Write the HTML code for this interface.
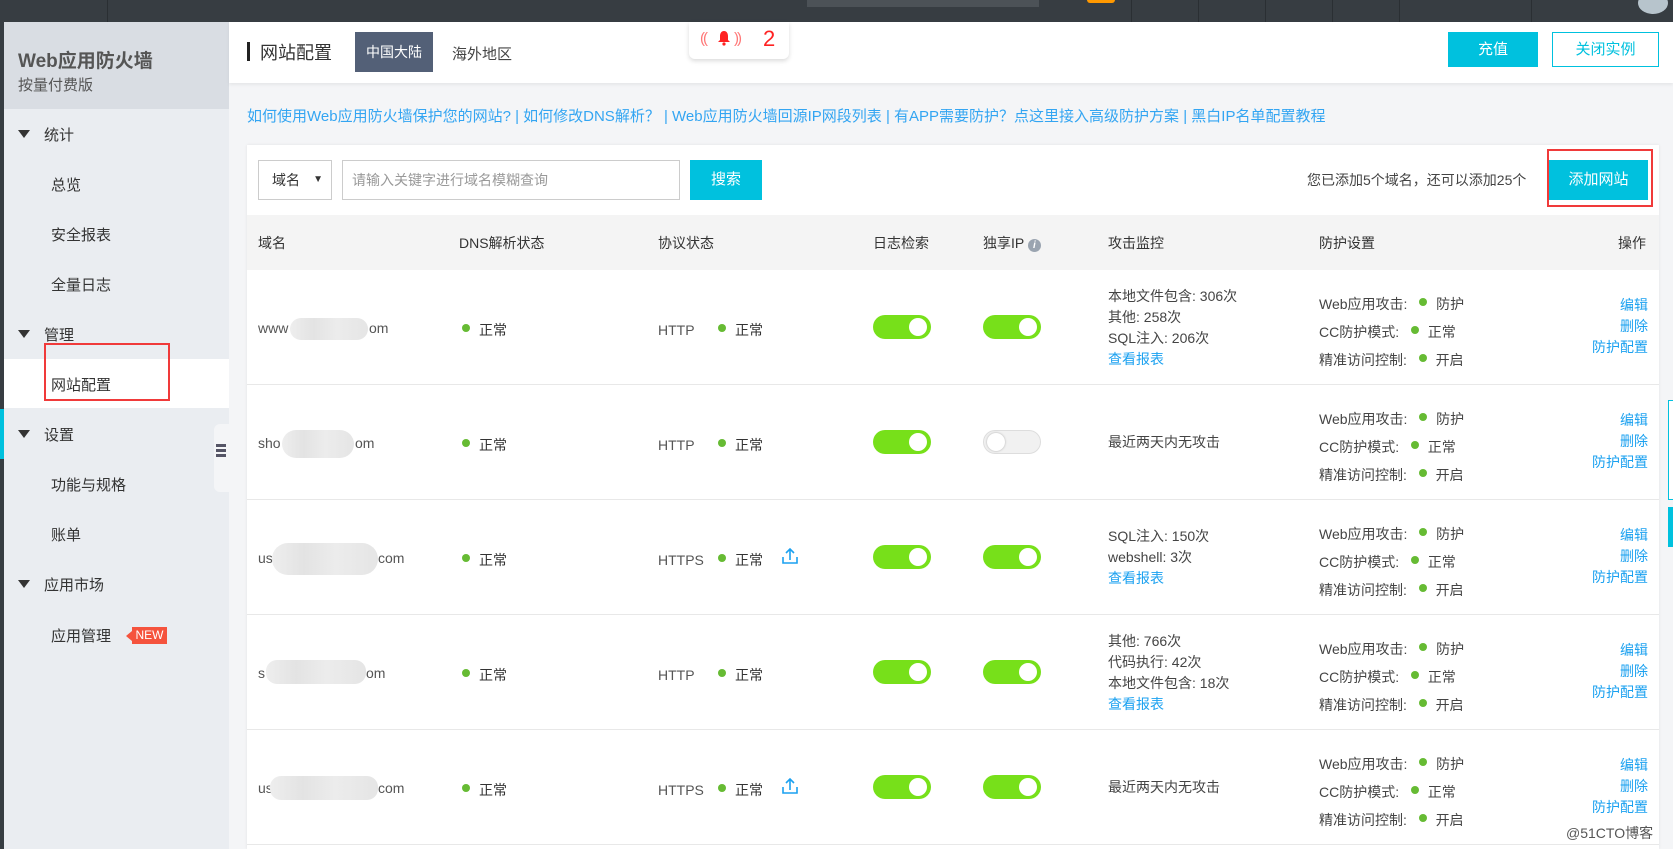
<!DOCTYPE html>
<html><head><meta charset="utf-8"><style>
*{margin:0;padding:0;box-sizing:border-box}
body{width:1673px;height:849px;overflow:hidden;background:#f4f5f7;font-family:"Liberation Sans","Noto Sans CJK SC",sans-serif;font-size:14px;color:#333;position:relative}
.a{position:absolute;white-space:nowrap}
.lk{color:#1ba1f0}
.dot{display:inline-block;width:8px;height:8px;border-radius:50%;background:#66bb33;margin-right:9px;vertical-align:3px}
.tg{position:absolute;width:58px;height:24px;border-radius:12px;background:#77e01a}
.tg::after{content:"";position:absolute;right:4px;top:3px;width:18px;height:18px;border-radius:50%;background:#fff}
.tg.off{background:#f1f1f1;border:1px solid #ddd}
.tg.off::after{left:3px;right:auto;top:2px;box-shadow:0 0 2px #aaa}
.blur{position:absolute;height:22px;border-radius:11px;background:linear-gradient(90deg,#eee,#e3e3e3 30%,#ececec 60%,#e5e5e5)}
.sb{color:#333;font-size:15px}
.tri{display:inline-block;width:0;height:0;border-left:6px solid transparent;border-right:6px solid transparent;border-top:8px solid #333;margin-right:14px;vertical-align:2px}
</style></head><body>
<!-- top bar -->
<div class="a" style="left:0;top:0;width:1673px;height:22px;background:#373d42"></div>
<div class="a" style="left:107px;top:0;width:1px;height:22px;background:#2a2f33"></div>
<div class="a" style="left:807px;top:0;width:232px;height:7px;background:#4c5257"></div>
<div class="a" style="left:1087px;top:0;width:28px;height:3px;background:#f90;border-radius:0 0 4px 4px"></div>
<div class="a" style="left:1131px;top:0;width:1px;height:22px;background:#2a2f33"></div>
<div class="a" style="left:1198px;top:0;width:1px;height:22px;background:#2a2f33"></div>
<div class="a" style="left:1265px;top:0;width:1px;height:22px;background:#2a2f33"></div>
<div class="a" style="left:1332px;top:0;width:1px;height:22px;background:#2a2f33"></div>
<div class="a" style="left:1399px;top:0;width:1px;height:22px;background:#2a2f33"></div>
<div class="a" style="left:1531px;top:0;width:1px;height:22px;background:#2a2f33"></div>
<div class="a" style="left:1638px;top:-8px;width:30px;height:22px;border-radius:50%;background:#b7c4cc"></div>
<!-- sidebar -->
<div class="a" style="left:0;top:22px;width:229px;height:827px;background:#eaedf1"></div>
<div class="a" style="left:0;top:22px;width:4px;height:827px;background:#373d42"></div>
<div class="a" style="left:4px;top:22px;width:225px;height:87px;background:#d9dde3"></div>
<div class="a" style="left:18px;top:46px;font-size:19px;font-weight:bold;color:#555">Web应用防火墙</div>
<div class="a" style="left:18px;top:74px;font-size:15px;color:#555">按量付费版</div>
<div class="a sb" style="left:18px;top:124px"><span class="tri"></span>统计</div>
<div class="a sb" style="left:51px;top:174px">总览</div>
<div class="a sb" style="left:51px;top:224px">安全报表</div>
<div class="a sb" style="left:51px;top:274px">全量日志</div>
<div class="a sb" style="left:18px;top:324px"><span class="tri"></span>管理</div>
<div class="a" style="left:4px;top:359px;width:225px;height:49px;background:#fff"></div>
<div class="a sb" style="left:51px;top:374px">网站配置</div>
<div class="a" style="left:44px;top:343px;width:126px;height:58px;border:2px solid #f03a3a"></div>
<div class="a" style="left:0;top:409px;width:4px;height:50px;background:#00c1de"></div>
<div class="a sb" style="left:18px;top:424px"><span class="tri"></span>设置</div>
<div class="a sb" style="left:51px;top:474px">功能与规格</div>
<div class="a sb" style="left:51px;top:524px">账单</div>
<div class="a sb" style="left:18px;top:574px"><span class="tri"></span>应用市场</div>
<div class="a sb" style="left:51px;top:625px">应用管理</div>
<div class="a" style="left:132px;top:627px;width:35px;height:17px;background:#f5533d;color:#fff;font-size:12px;line-height:17px;text-align:center">NEW</div>
<div class="a" style="left:126px;top:631px;width:0;height:0;border-top:5px solid transparent;border-bottom:5px solid transparent;border-right:6px solid #f5533d"></div>
<div class="a" style="left:214px;top:424px;width:15px;height:68px;background:#f4f5f7;border-radius:6px 0 0 6px"></div>
<div class="a" style="left:216px;top:444px;width:10px;height:3px;background:#556;box-shadow:0 5px 0 #556,0 10px 0 #556"></div>
<!-- header -->
<div class="a" style="left:229px;top:22px;width:1444px;height:61px;background:#fff;box-shadow:0 2px 3px rgba(0,0,0,.06)"></div>
<div class="a" style="left:247px;top:42px;width:3px;height:19px;background:#222"></div>
<div class="a" style="left:260px;top:39px;font-size:18px;color:#333">网站配置</div>
<div class="a" style="left:355px;top:32px;width:78px;height:40px;background:#536077;color:#fff;font-size:14px;line-height:40px;text-align:center">中国大陆</div>
<div class="a" style="left:452px;top:43px;font-size:15px;color:#444">海外地区</div>
<div class="a" style="left:689px;top:22px;width:100px;height:37px;background:#fff;border-radius:0 0 6px 6px;box-shadow:0 2px 5px rgba(0,0,0,.15)"></div>
<div class="a" style="left:700px;top:30px;color:#f77;font-size:15px;letter-spacing:-2px">((</div>
<div class="a" style="left:734px;top:30px;color:#f77;font-size:15px;letter-spacing:-2px">))</div>
<svg class="a" style="left:717px;top:30px" width="14" height="16" viewBox="0 0 14 16"><path d="M7 1C4 1 3 4 3 6v4L1 12h12l-2-2V6c0-2-1-5-4-5z" fill="#f22"/><circle cx="7" cy="14" r="1.6" fill="#f22"/></svg>
<div class="a" style="left:763px;top:26px;font-size:22px;color:#f22">2</div>
<div class="a" style="left:1448px;top:32px;width:90px;height:35px;background:#00c1de;color:#fff;font-size:15px;line-height:35px;text-align:center">充值</div>
<div class="a" style="left:1552px;top:32px;width:107px;height:35px;border:1px solid #00c1de;color:#00c1de;font-size:15px;line-height:33px;text-align:center;background:#fff">关闭实例</div>
<!-- links -->
<div class="a" style="left:247px;top:105px;font-size:15px;color:#33a5f2">如何使用Web应用防火墙保护您的网站? | 如何修改DNS解析？ | Web应用防火墙回源IP网段列表 | 有APP需要防护？点这里接入高级防护方案 | 黑白IP名单配置教程</div>
<!-- card -->
<div class="a" style="left:247px;top:145px;width:1412px;height:704px;background:#fff;box-shadow:0 0 3px rgba(0,0,0,.08)"></div>
<div class="a" style="left:258px;top:160px;width:74px;height:40px;border:1px solid #ccc;font-size:14px;line-height:38px;padding-left:13px;color:#333">域名<span style="position:absolute;right:8px;font-size:10px">▼</span></div>
<div class="a" style="left:342px;top:160px;width:338px;height:40px;border:1px solid #ccc;font-size:14px;line-height:38px;padding-left:9px;color:#999">请输入关键字进行域名模糊查询</div>
<div class="a" style="left:690px;top:160px;width:72px;height:40px;background:#00c1de;color:#fff;font-size:15px;line-height:40px;text-align:center">搜索</div>
<div class="a" style="left:1307px;top:170px;font-size:14px;color:#444">您已添加5个域名，还可以添加25个</div>
<div class="a" style="left:1549px;top:160px;width:99px;height:40px;background:#00c1de;color:#fff;font-size:15px;line-height:40px;text-align:center">添加网站</div>
<div class="a" style="left:1547px;top:149px;width:106px;height:58px;border:2px solid #f03a3a"></div>
<!-- table header -->
<div class="a" style="left:247px;top:215px;width:1412px;height:55px;background:#f4f4f4"></div>
<div class="a" style="left:258px;top:233px">域名</div>
<div class="a" style="left:459px;top:233px">DNS解析状态</div>
<div class="a" style="left:658px;top:233px">协议状态</div>
<div class="a" style="left:873px;top:233px">日志检索</div>
<div class="a" style="left:983px;top:233px">独享IP <span style="display:inline-block;width:13px;height:13px;border-radius:50%;background:#9aa4b0;color:#fff;font-size:10px;line-height:13px;text-align:center;font-style:italic;font-weight:bold">i</span></div>
<div class="a" style="left:1108px;top:233px">攻击监控</div>
<div class="a" style="left:1319px;top:233px">防护设置</div>
<div class="a" style="left:1618px;top:233px">操作</div>
<!-- rows -->
<div class="a" style="left:247px;top:384px;width:1412px;height:1px;background:#e8e8e8"></div>
<div class="a" style="left:247px;top:499px;width:1412px;height:1px;background:#e8e8e8"></div>
<div class="a" style="left:247px;top:614px;width:1412px;height:1px;background:#e8e8e8"></div>
<div class="a" style="left:247px;top:729px;width:1412px;height:1px;background:#e8e8e8"></div>
<div class="a" style="left:247px;top:844px;width:1412px;height:1px;background:#e8e8e8"></div>

<div class="a" style="left:258px;top:320px;color:#555">www</div><div class="blur" style="left:290px;top:318px;width:78px"></div><div class="a" style="left:369px;top:320px;color:#555">om</div>
<div class="a" style="left:462px;top:320px"><span class="dot"></span>正常</div>
<div class="a" style="left:658px;top:322px;color:#555">HTTP</div><div class="a" style="left:718px;top:320px"><span class="dot"></span>正常</div>
<div class="tg" style="left:873px;top:315px"></div><div class="tg" style="left:983px;top:315px"></div>
<div class="a" style="left:1108px;top:286px;line-height:21px;color:#444">本地文件包含: 306次<br>其他: 258次<br>SQL注入: 206次<br><span class="lk">查看报表</span></div>
<div class="a" style="left:1319px;top:290px;line-height:28px;color:#444">Web应用攻击:&nbsp;&nbsp;&nbsp;<span class="dot"></span>防护<br>CC防护模式:&nbsp;&nbsp;&nbsp;<span class="dot"></span>正常<br>精准访问控制:&nbsp;&nbsp;&nbsp;<span class="dot"></span>开启</div>
<div class="a lk" style="left:1588px;top:295px;line-height:21px;text-align:right;width:60px">编辑<br>删除<br>防护配置</div>

<div class="a" style="left:258px;top:435px;color:#555">sho</div><div class="blur" style="left:282px;top:430px;width:72px;height:28px;border-radius:14px"></div><div class="a" style="left:355px;top:435px;color:#555">om</div>
<div class="a" style="left:462px;top:435px"><span class="dot"></span>正常</div>
<div class="a" style="left:658px;top:437px;color:#555">HTTP</div><div class="a" style="left:718px;top:435px"><span class="dot"></span>正常</div>
<div class="tg" style="left:873px;top:430px"></div><div class="tg off" style="left:983px;top:430px"></div>
<div class="a" style="left:1108px;top:432px;color:#444">最近两天内无攻击</div>
<div class="a" style="left:1319px;top:405px;line-height:28px;color:#444">Web应用攻击:&nbsp;&nbsp;&nbsp;<span class="dot"></span>防护<br>CC防护模式:&nbsp;&nbsp;&nbsp;<span class="dot"></span>正常<br>精准访问控制:&nbsp;&nbsp;&nbsp;<span class="dot"></span>开启</div>
<div class="a lk" style="left:1588px;top:410px;line-height:21px;text-align:right;width:60px">编辑<br>删除<br>防护配置</div>

<div class="a" style="left:258px;top:550px;color:#555">us</div><div class="blur" style="left:272px;top:543px;width:106px;height:32px;border-radius:16px"></div><div class="a" style="left:378px;top:550px;color:#555">com</div>
<div class="a" style="left:462px;top:550px"><span class="dot"></span>正常</div>
<div class="a" style="left:658px;top:552px;color:#555">HTTPS</div><div class="a" style="left:718px;top:550px"><span class="dot"></span>正常</div>
<svg class="a" style="left:781px;top:547px" width="18" height="18" viewBox="0 0 18 18"><path d="M9 13V2M5 6l4-4 4 4M2 10v6h14v-6" fill="none" stroke="#1ba1f0" stroke-width="1.6"/></svg>
<div class="tg" style="left:873px;top:545px"></div><div class="tg" style="left:983px;top:545px"></div>
<div class="a" style="left:1108px;top:526px;line-height:21px;color:#444">SQL注入: 150次<br>webshell: 3次<br><span class="lk">查看报表</span></div>
<div class="a" style="left:1319px;top:520px;line-height:28px;color:#444">Web应用攻击:&nbsp;&nbsp;&nbsp;<span class="dot"></span>防护<br>CC防护模式:&nbsp;&nbsp;&nbsp;<span class="dot"></span>正常<br>精准访问控制:&nbsp;&nbsp;&nbsp;<span class="dot"></span>开启</div>
<div class="a lk" style="left:1588px;top:525px;line-height:21px;text-align:right;width:60px">编辑<br>删除<br>防护配置</div>

<div class="a" style="left:258px;top:665px;color:#555">s</div><div class="blur" style="left:266px;top:660px;width:100px;height:24px"></div><div class="a" style="left:366px;top:665px;color:#555">om</div>
<div class="a" style="left:462px;top:665px"><span class="dot"></span>正常</div>
<div class="a" style="left:658px;top:667px;color:#555">HTTP</div><div class="a" style="left:718px;top:665px"><span class="dot"></span>正常</div>
<div class="tg" style="left:873px;top:660px"></div><div class="tg" style="left:983px;top:660px"></div>
<div class="a" style="left:1108px;top:631px;line-height:21px;color:#444">其他: 766次<br>代码执行: 42次<br>本地文件包含: 18次<br><span class="lk">查看报表</span></div>
<div class="a" style="left:1319px;top:635px;line-height:28px;color:#444">Web应用攻击:&nbsp;&nbsp;&nbsp;<span class="dot"></span>防护<br>CC防护模式:&nbsp;&nbsp;&nbsp;<span class="dot"></span>正常<br>精准访问控制:&nbsp;&nbsp;&nbsp;<span class="dot"></span>开启</div>
<div class="a lk" style="left:1588px;top:640px;line-height:21px;text-align:right;width:60px">编辑<br>删除<br>防护配置</div>

<div class="a" style="left:258px;top:780px;color:#555">us</div><div class="blur" style="left:270px;top:776px;width:108px;height:24px"></div><div class="a" style="left:378px;top:780px;color:#555">com</div>
<div class="a" style="left:462px;top:780px"><span class="dot"></span>正常</div>
<div class="a" style="left:658px;top:782px;color:#555">HTTPS</div><div class="a" style="left:718px;top:780px"><span class="dot"></span>正常</div>
<svg class="a" style="left:781px;top:777px" width="18" height="18" viewBox="0 0 18 18"><path d="M9 13V2M5 6l4-4 4 4M2 10v6h14v-6" fill="none" stroke="#1ba1f0" stroke-width="1.6"/></svg>
<div class="tg" style="left:873px;top:775px"></div><div class="tg" style="left:983px;top:775px"></div>
<div class="a" style="left:1108px;top:777px;color:#444">最近两天内无攻击</div>
<div class="a" style="left:1319px;top:750px;line-height:28px;color:#444">Web应用攻击:&nbsp;&nbsp;&nbsp;<span class="dot"></span>防护<br>CC防护模式:&nbsp;&nbsp;&nbsp;<span class="dot"></span>正常<br>精准访问控制:&nbsp;&nbsp;&nbsp;<span class="dot"></span>开启</div>
<div class="a lk" style="left:1588px;top:755px;line-height:21px;text-align:right;width:60px">编辑<br>删除<br>防护配置</div>
<div class="a" style="left:1566px;top:823px;font-size:14px;color:#555">@51CTO博客</div>
<div class="a" style="left:1668px;top:400px;width:6px;height:100px;border:1px solid #00c1de;background:#fff"></div>
<div class="a" style="left:1668px;top:507px;width:5px;height:40px;background:#00c1de"></div>
</body></html>
